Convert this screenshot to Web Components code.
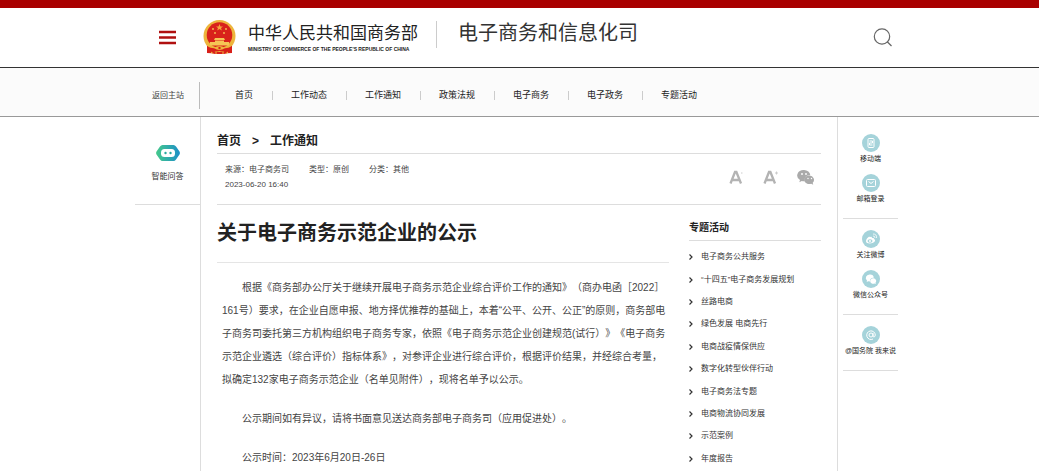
<!DOCTYPE html>
<html lang="zh-CN">
<head>
<meta charset="utf-8">
<title>电子商务和信息化司</title>
<style>
html,body{margin:0;background:#fff}
body{font-family:"Liberation Sans","Noto Sans CJK SC",sans-serif;color:#333;text-spacing-trim:space-all}
</style>
</head>
<body>
<page-shell></page-shell>
<script>
const define = (name, html, setup) => customElements.define(name, class extends HTMLElement {
  constructor() {
    super();
    const t = document.createElement('template');
    t.innerHTML = '<style>*{box-sizing:border-box}a{color:inherit;text-decoration:none}svg{display:block}</style>' + html;
    this.attachShadow({ mode: 'open' }).append(t.content.cloneNode(true));
    if (setup) setup(this.shadowRoot);
  }
});

define('site-header', `
<style>
:host{display:block;border-top:8px solid #a90000;border-bottom:1px solid #333}
.in{max-width:769px;margin:0 auto;height:59px;display:flex;align-items:center;padding:0 11px 0 24px}
button{border:0;background:none;padding:0;margin:0;display:block}
.brand{display:flex;align-items:center;gap:12px;margin-left:27px}
.names{display:flex;flex-direction:column;white-space:nowrap;gap:2px}
.cn{font-size:17px;line-height:20px;color:#222}
.en{font-size:5px;line-height:6px;color:#222;font-weight:700}
.dept{margin-left:18px;border-left:1px solid #ccc;padding:0 0 0 21px;height:27px;line-height:24px;font-size:20px;color:#333;white-space:nowrap;margin-bottom:6px}
.search{margin-left:auto}
</style>
<header class="in">
<button aria-label="菜单"><svg width="17" height="16"><path d="M0 2h17M0 7.500h17M0 13h17" stroke="#b01010" stroke-width="2.400"/></svg></button>
<a class="brand" href="#">
<svg width="33" height="35" viewBox="0 0 33 35">
<path d="M4 24v9q5 0 8 1h9q3-1 8-1v-9z" fill="#d8201a"/>
<circle cx="16.500" cy="16" r="16" fill="#edb53c"/><circle cx="16.500" cy="15" r="12.800" fill="#d9221b"/>
<path d="M16.500 4l1 2.500h2.500l-2 1.500.8 2.500-2.300-1.500-2.300 1.500.8-2.500-2-1.500h2.500z" fill="#f3a63c"/>
<g fill="#f6c555"><circle cx="10" cy="9" r=".9"/><circle cx="23" cy="9" r=".9"/><circle cx="12" cy="13" r=".9"/><circle cx="21" cy="13" r=".9"/>
<path d="M12 18h9l1 2h-11zM12 20.500h9V22h5v3.500H7V22h5z"/></g>
<path d="M4 26q6 4 12.500 1q6.500 3 12.500-1v5q-7 1-12.500 0q-6 1-12.500 0z" fill="#d8201a"/><path d="M11 28q5.500-4 11 0-5.500 4-11 0z" fill="#edb53c"/><circle cx="16.500" cy="28" r="1.200" fill="#d8201a"/>
<path d="M8 32l2 1.500M13 31.500v2.500M20 31.500v2.500M25 32l-2 1.500" stroke="#f3bd3c"/>
</svg>
<span class="names"><span class="cn">中华人民共和国商务部</span><span class="en">MINISTRY OF COMMERCE OF THE PEOPLE'S REPUBLIC OF CHINA</span></span></a>
<span class="dept">电子商务和信息化司</span>
<button class="search" aria-label="搜索"><svg width="20" height="20" fill="none" stroke="#666" stroke-width="1.200"><circle cx="9" cy="8.500" r="7.700"/><path d="M14 13.500l4.500 4.500"/></svg></button>
</header>`);

define('site-nav', `
<style>
:host{display:block;background:#fbfbfb;border-bottom:1px solid #999}
nav{max-width:769px;margin:0 auto;padding-top:6px;height:48px;display:flex;align-items:center;font-size:9px;line-height:14px;color:#222;white-space:nowrap}
.back{width:65px;height:27px;line-height:27px;border-right:1px solid #bbb;font-size:8px;padding-left:17px;color:#444}
ul{list-style:none;display:flex;align-items:center;margin:0;padding:0 0 0 35px}
li{display:flex;align-items:center}
li+li::before{content:"";width:1px;height:9px;background:#ccc;margin:0 18px 0 19px}
</style>
<nav><a class="back" href="#">返回主站</a><ul>
<li><a href="#">首页</a></li><li><a href="#">工作动态</a></li><li><a href="#">工作通知</a></li><li><a href="#">政策法规</a></li><li><a href="#">电子商务</a></li><li><a href="#">电子政务</a></li><li><a href="#">专题活动</a></li></ul></nav>`);

define('assistant-rail', `
<style>
:host{display:block;border-right:1px solid #ddd}
a{display:flex;flex-direction:column;align-items:center;gap:8px;padding:28px 0 20px;border-bottom:1px solid #ddd;font-size:8px;line-height:15px}
</style>
<a href="#"><svg width="24" height="16"><defs><linearGradient id="g"><stop stop-color="#45c98b"/><stop offset="1" stop-color="#1c8fc8"/></linearGradient></defs><path d="M6.500 0h11q1.500 0 2.500 1.500l3.500 5q.8 1.500 0 3l-3.500 5q-1 1.500-2.500 1.500h-11q-1.500 0-2.500-1.500l-3.500-5q-.8-1.500 0-3l3.500-5q1-1.500 2.500-1.500z" fill="url(#g)"/><rect x="5" y="4" width="14" height="8" rx="3.500" fill="#fff"/><circle cx="9.500" cy="8" r="1.200" fill="#28a9a0"/><circle cx="14.500" cy="8" r="1.200" fill="#28a9a0"/></svg>智能问答</a>`);

define('article-head', `
<style>
:host{display:block}
.crumb{display:flex;gap:11px;font-size:12px;line-height:20px;font-weight:700;color:#222;padding:14px 0 2px;border-bottom:1px solid #ddd}
.meta{display:flex;justify-content:space-between;align-items:center;height:51px;border-bottom:1px solid #ddd;padding:0 6px 0 8px;font-size:8px;line-height:15px;color:#444}
.row{display:flex;gap:20px}
.info{padding-bottom:5px}
.tools{display:flex;gap:18px;align-items:center;padding-bottom:5px}
button{border:0;background:none;padding:0}
</style>
<nav class="crumb"><a href="#">首页</a><span>&gt;</span><a href="#">工作通知</a></nav>
<div class="meta"><div class="info"><div class="row"><span>来源：电子商务司</span><span>类型：原创</span><span>分类：其他</span></div><time>2023-06-20 16:40</time></div>
<div class="tools">
<button aria-label="缩小字号"><svg width="16" height="16" fill="none" stroke="#b3b3b3"><path d="M1.500 14.500L6 3h1.400L12 14.500M3.500 11h6.500" stroke-width="2.300"/><path d="M12 4h1.500" stroke="#ccc"/></svg></button>
<button aria-label="放大字号"><svg width="16" height="16" fill="none" stroke="#b3b3b3"><path d="M1.500 14.500L6 3h1.400L12 14.500M3.500 11h6.500" stroke-width="2.300"/><path d="M12 4h3M13.500 2.500v3" stroke="#ccc"/></svg></button>
<button aria-label="微信分享"><svg width="18" height="16"><path d="M7 1a6.500 5.500 0 0 0-4 10l-.7 2.300 2.500-1.300q1.500.5 3 .3a5 4.500 0 0 1 5.500-6A6.500 5.500 0 0 0 7 1z" fill="#aaa"/><path d="M12.500 6.500a5 4.300 0 1 0 1.700 8.200l2 1-.5-1.900a4.500 4.300 0 0 0-3.200-7.300z" fill="#aaa"/><g fill="#fff"><circle cx="5" cy="5" r=".9"/><circle cx="9" cy="5" r=".9"/><circle cx="11" cy="9.500" r=".7"/><circle cx="14.500" cy="9.500" r=".7"/></g></svg></button>
</div></div>`);

define('article-body', `
<style>
:host{display:block;flex:1;min-width:0}
h1{margin:0;font-size:20px;line-height:30px;color:#222;padding:13px 0 14px;border-bottom:1px solid #e5e5e5}
.text{padding:13px 0 0 5px;font-size:10px;line-height:23px;color:#444}
::slotted(p){margin:0 0 16px;text-indent:20px}
::slotted(p:last-of-type){margin:0}
</style>
<article><h1><slot name="title"></slot></h1><div class="text"><slot></slot></div></article>`);

const topics = ['电子商务公共服务', '“十四五”电子商务发展规划', '丝路电商', '绿色发展 电商先行', '电商战疫情保供应', '数字化转型伙伴行动', '电子商务法专题', '电商物流协同发展', '示范案例', '年度报告'];
define('topic-list', `
<style>
:host{display:flex;flex-direction:column;width:132px;flex:none}
h2{margin:0;font-size:10px;line-height:15px;color:#222;padding:15px 0 5px;border-bottom:1px solid #ddd}
ul{flex:1;list-style:none;margin:0;padding:5px 0 1px;display:grid;grid-auto-rows:1fr;font-size:8px;line-height:14px;color:#333}
li{display:flex;align-items:center;gap:8px}
</style>
<h2>专题活动</h2><ul></ul>`, root => {
  root.querySelector('ul').innerHTML = topics
    .map(t => `<li><svg width="4" height="6" fill="none" stroke="#333" stroke-width="1.200"><path d="M.5.5L3 3 .5 5.500"/></svg><a href="#">${t}</a></li>`).join('');
});

define('quick-link', `
<style>
:host{display:block}
a{display:flex;flex-direction:column;align-items:center;font-size:7px;line-height:13px;white-space:nowrap;color:#222}
i{display:grid;place-items:center;width:18px;height:18px;border-radius:50%;background:#a5d3da}
</style>
<a href="#"><i><slot name="icon"></slot></i><slot></slot></a>`);

define('quick-rail', `
<style>
:host{display:block;border-left:1px solid #ddd;padding:6px 6px 0 5px}
div{display:grid;gap:9px;padding:11px 0 13px;border-bottom:1px solid #ddd}
</style>
<div><quick-link><svg slot="icon" width="12" height="12" fill="none" stroke="#fff"><rect x="3" y="1.500" width="6" height="9" rx="1"/><path d="M4.500 4h3v2h-3v2h3"/></svg>移动端</quick-link>
<quick-link><svg slot="icon" width="12" height="12" fill="none" stroke="#fff"><rect x="1.500" y="2.500" width="9" height="7" rx="1"/><path d="M3.500 4.500L6 6.500l2.500-2"/></svg>邮箱登录</quick-link></div>
<div><quick-link><svg slot="icon" width="12" height="12"><path d="M5 4q2-1 2 1 2.500-.5 2 1 1.500.5 1 2c-1 3-9 3.500-9 .3C1 6 4 2.500 5 4z" fill="#fff"/><ellipse cx="5" cy="8" rx="2.500" ry="1.700" fill="#a5d3da"/><circle cx="5" cy="8" r="1" fill="#fff"/><path d="M8 3q2 0 2 2M8 1q4 0 3.500 4" fill="none" stroke="#fff" stroke-width=".8"/></svg>关注微博</quick-link>
<quick-link><svg slot="icon" width="12" height="12"><path d="M4.500 1.500a4 3.500 0 0 0-2.500 6l-.3 1.500 1.500-.8 1.800.2a3.500 3 0 0 1 3.800-3.700 4 3.500 0 0 0-4.300-3.200z" fill="#fff"/><path d="M8.500 5.300a3 2.700 0 1 0 1 5.100l1.300.6-.3-1.300a3 2.700 0 0 0-2-4.400z" fill="#fff"/></svg>微信公众号</quick-link></div>
<div><quick-link><svg slot="icon" width="12" height="12" fill="none" stroke="#fff"><circle cx="6" cy="6" r="2"/><path d="M8 4v3q0 1 1 1t1.300-2A4.300 4.300 0 1 0 8 10"/></svg>@国务院 我来说</quick-link></div>`);

define('page-shell', `
<style>
:host{display:flex;flex-direction:column;min-height:100vh}
.cols{flex:1;width:100%;max-width:769px;margin:0 auto;display:grid;grid-template-columns:66px minmax(0,1fr) 67px}
main{display:flex;flex-direction:column;padding:0 16px}
.split{flex:1;display:flex;gap:20px}
</style>
<site-header></site-header><site-nav></site-nav>
<div class="cols"><assistant-rail></assistant-rail>
<main><article-head></article-head><div class="split"><article-body><span slot="title">关于电子商务示范企业的公示</span>
<p>根据《商务部办公厅关于继续开展电子商务示范企业综合评价工作的通知》（商办电函［2022］161号）要求，在企业自愿申报、地方择优推荐的基础上，本着“公平、公开、公正”的原则，商务部电子商务司委托第三方机构组织电子商务专家，依照《电子商务示范企业创建规范(试行）》《电子商务示范企业遴选（综合评价）指标体系》，对参评企业进行综合评价，根据评价结果，并经综合考量，拟确定132家电子商务示范企业（名单见附件），现将名单予以公示。</p>
<p>公示期间如有异议，请将书面意见送达商务部电子商务司（应用促进处）。</p>
<p>公示时间：2023年6月20日-26日</p></article-body><topic-list></topic-list></div></main>
<quick-rail></quick-rail></div>`);
</script>
</body>
</html>
